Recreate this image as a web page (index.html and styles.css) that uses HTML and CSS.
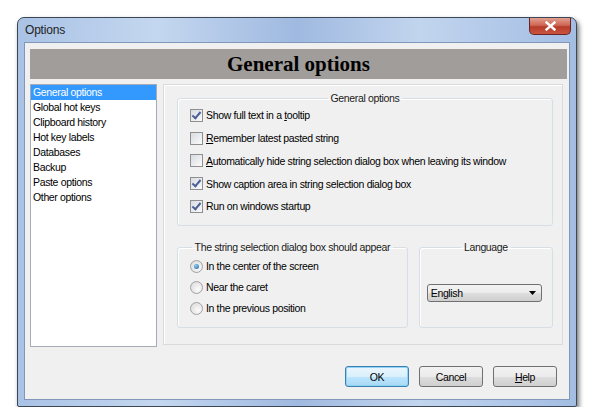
FILE: index.html
```html
<!DOCTYPE html>
<html lang="en">
<head>
  <meta charset="UTF-8">
  <title>Options</title>
  <link rel="stylesheet" href="styles.css">
</head>
<body>
<div class="window">
  <div class="titlebar">
    <span class="title">Options</span>
    <button class="close">
      <svg width="11" height="10" viewBox="0 0 11 10"><path d="M1.5 1.5 L9.5 8.5 M9.5 1.5 L1.5 8.5" stroke="#fff" stroke-width="2.4" stroke-linecap="square"/></svg>
    </button>
  </div>
  <div class="client">
    <div class="header">General options</div>
    <div class="main">
      <ul class="list">
        <li class="selected">General options</li>
        <li>Global hot keys</li>
        <li>Clipboard history</li>
        <li>Hot key labels</li>
        <li>Databases</li>
        <li>Backup</li>
        <li>Paste options</li>
        <li>Other options</li>
      </ul>
      <div class="panel">
        <fieldset class="group general">
          <legend>General options</legend>
          <label class="row"><span class="check on"></span><span>Show full text in a <u>t</u>ooltip</span></label>
          <label class="row"><span class="check"></span><span><u>R</u>emember latest pasted string</span></label>
          <label class="row"><span class="check"></span><span><u>A</u>utomatically hide string selection dialog box when leaving its window</span></label>
          <label class="row"><span class="check on"></span><span>Show caption area in string selection dialog box</span></label>
          <label class="row"><span class="check on"></span><span>Run on windows startup</span></label>
        </fieldset>
        <div class="bottom">
          <fieldset class="group appear">
            <legend>The string selection dialog box should appear</legend>
            <label class="row radio-row"><span class="radio on"></span><span>In the center of the screen</span></label>
            <label class="row radio-row"><span class="radio"></span><span>Near the caret</span></label>
            <label class="row radio-row"><span class="radio"></span><span>In the previous position</span></label>
          </fieldset>
          <fieldset class="group language">
            <legend>Language</legend>
            <div class="combo">
              <span>English</span>
              <svg width="7" height="4" viewBox="0 0 7 4"><path d="M0 0 H7 L3.5 4 Z" fill="#000"/></svg>
            </div>
          </fieldset>
        </div>
      </div>
    </div>
    <div class="buttons">
      <button class="btn default">OK</button>
      <button class="btn">Cancel</button>
      <button class="btn"><u>H</u>elp</button>
    </div>
  </div>
</div>
</body>
</html>
```

FILE: styles.css
```css
body {
  margin: 0;
  background-color: #fff;
  font-family: "Liberation Sans", Arial, sans-serif;
  font-size: 10.5px;
  letter-spacing: -0.35px;
  color: #000;
}
.window {
  margin: 17px 0 0 17px;
  width: 558px;
  height: 388px;
  border: 1px solid #3b4656;
  border-radius: 7px 7px 2px 2px;
  background: linear-gradient(to right, #a9c2e5, #c4d7ef 25%, #9fb9e0 50%, #c2d5ee 72%, #a3bde3);
  box-shadow: 2px 3px 5px rgba(0,0,0,0.55);
  display: flex;
  flex-direction: column;
}
.titlebar {
  height: 24px;
  display: flex;
  justify-content: space-between;
  align-items: flex-start;
}
.title {
  margin: 5px 0 0 7px;
  font-size: 12px;
  letter-spacing: -0.2px;
  color: #1e1e1e;
}
.close {
  width: 42px;
  height: 17px;
  margin: 0 5px 0 0;
  padding: 0;
  border: 1px solid #6b2323;
  border-top: none;
  border-radius: 0 0 5px 5px;
  background: linear-gradient(#e3a08f, #cf6755 45%, #b73b2a 55%, #c95540);
  display: flex;
  align-items: center;
  justify-content: center;
}
.client {
  flex: 1;
  margin: 0 6px 6px 6px;
  border: 1px solid #8197b9;
  background-color: #f0f0f0;
  padding: 6px 2px 0 5px;
  display: flex;
  flex-direction: column;
}
.header {
  width: 537px;
  height: 30px;
  background-color: #a09d9a;
  font-family: "Liberation Serif", "Times New Roman", serif;
  font-weight: bold;
  font-size: 21px;
  letter-spacing: 0;
  text-align: center;
  line-height: 30px;
}
.main {
  display: flex;
  gap: 6px;
  margin-top: 5px;
}
.list {
  list-style: none;
  margin: 0;
  padding: 0;
  width: 125px;
  height: 261px;
  background-color: #fff;
  border: 1px solid #a5acb5;
}
.list li {
  height: 15px;
  line-height: 15px;
  padding-left: 2px;
  white-space: nowrap;
}
.list .selected {
  background-color: #3399ff;
  color: #fff;
}
.panel {
  border: 1px solid #dadada;
  box-shadow: inset 1px 1px 0 #fff;
  padding: 7px 9px 0 13px;
  box-sizing: border-box;
  width: 400px;
  height: 261px;
}
.group {
  margin: 0;
  border: 1px solid #d5dfe5;
  border-radius: 3px;
  padding: 0 0 7px 0;
  box-shadow: inset 1px 1px 0 #fff;
}
.group legend {
  margin: 0 auto;
  padding: 0 3px;
  line-height: 13px;
  white-space: nowrap;
  color: #1a1a1a;
}
.row {
  display: flex;
  align-items: center;
  height: 22.75px;
  padding-left: 12px;
  white-space: nowrap;
}
.general .row:first-of-type {
  margin-top: -1px;
}
.check {
  width: 11px;
  height: 11px;
  border: 1px solid #8f8f8f;
  background: linear-gradient(135deg, #d8dbe0, #fafafa);
  margin-right: 3px;
  flex: none;
  position: relative;
}
.check.on::after {
  content: "";
  position: absolute;
  left: 3px;
  top: 0;
  width: 3px;
  height: 7px;
  border: solid #4a5f97;
  border-width: 0 2px 2px 0;
  transform: rotate(40deg);
}
.bottom {
  display: flex;
  gap: 11px;
  margin-top: 15px;
}
.appear {
  width: 232px;
  box-sizing: border-box;
  padding: 2px 0 8px 0;
}
.radio-row {
  height: 21px;
}
.radio {
  width: 11px;
  height: 11px;
  border: 1px solid #a2a2a2;
  border-radius: 50%;
  background: radial-gradient(circle at 65% 65%, #fbfbfb, #d6d6d6);
  margin-right: 3px;
  flex: none;
  position: relative;
}
.radio.on::after {
  content: "";
  position: absolute;
  left: 3px;
  top: 3px;
  width: 5px;
  height: 5px;
  border-radius: 50%;
  background: radial-gradient(circle at 40% 35%, #8fd0f3, #1b5c99);
}
.language {
  width: 135px;
  box-sizing: border-box;
  padding: 30px 0 0 0;
}
.combo {
  height: 18px;
  margin: 0 10px 0 7px;
  box-sizing: border-box;
  border: 1px solid #707070;
  border-radius: 3px;
  background: linear-gradient(#f3f3f3, #ebebeb 50%, #dddddd 51%, #cfcfcf);
  display: flex;
  align-items: center;
  justify-content: space-between;
  padding: 0 5px 0 3px;
}
.buttons {
  display: flex;
  justify-content: flex-end;
  gap: 10px;
  margin: 19px 10px 0 0;
}
.btn {
  width: 64px;
  height: 21px;
  padding: 0;
  font-family: "Liberation Sans", Arial, sans-serif;
  font-size: 10.5px;
  letter-spacing: -0.35px;
  color: #000;
  border: 1px solid #707070;
  border-radius: 3px;
  background: linear-gradient(#f2f2f2, #ebebeb 50%, #dddddd 51%, #cfcfcf);
}
.btn.default {
  border-color: #3c7fb1;
  background: linear-gradient(#eaf6fd, #d9f0fc 50%, #bee6fd 51%, #a7d9f5);
  box-shadow: inset 0 0 0 1px #8fd3f5;
}
```
